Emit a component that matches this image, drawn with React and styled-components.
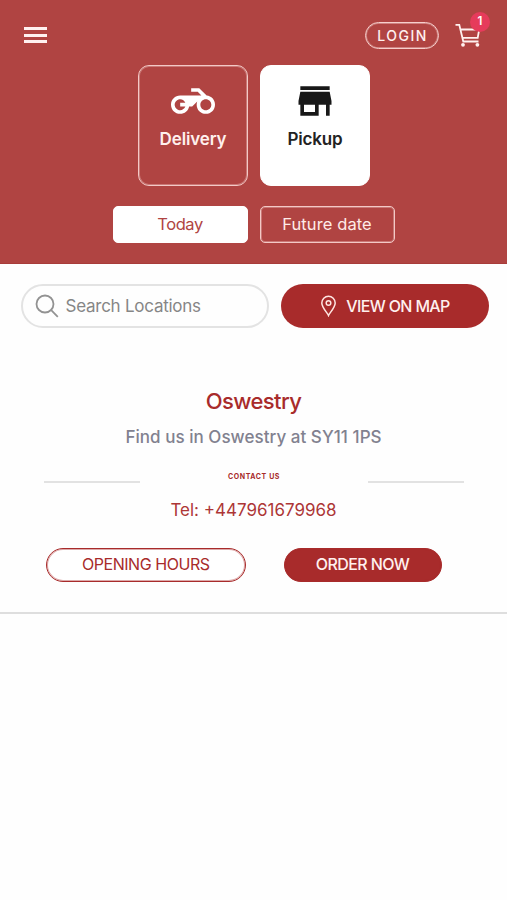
import React from 'react';
import styled, { createGlobalStyle } from 'styled-components';

const GlobalStyle = createGlobalStyle`
  * { box-sizing: border-box; }
  body { margin: 0; background: #fefefe; font-family: Inter, "Liberation Sans", sans-serif; }
  button, input { font-family: inherit; margin: 0; padding: 0; }
`;

const Page = styled.div`
  min-height: 900px;
  overflow: hidden;
`;

const Header = styled.header`
  height: 263.5px;
  background: #b04442;
  border-bottom: 1px solid #a83c3a;
`;

const TopBar = styled.div`
  display: flex;
  align-items: center;
  height: 65px;
  padding: 5px 25px 0 24px;
`;

const MenuButton = styled.button`
  display: flex;
  flex-direction: column;
  gap: 3.2px;
  width: 22.5px;
  margin-right: auto;
  border: 0;
  background: none;
`;

const MenuLine = styled.span`
  height: 3px;
  background: #fff1f0;
`;

const LoginButton = styled.button`
  width: 74px;
  height: 27px;
  border: 1px solid #f6cfcc;
  box-shadow: inset 0 0 0 1px rgba(246, 207, 204, 0.45);
  border-radius: 14px;
  background: none;
  color: #fff0ee;
  font-size: 14px;
  font-weight: 500;
  line-height: 25px;
  letter-spacing: 1.45px;
  padding-left: 1px;
`;

const Cart = styled.div`
  position: relative;
  width: 27px;
  height: 25px;
  margin-left: 16px;
`;

const Badge = styled.span`
  position: absolute;
  top: -11px;
  right: -8px;
  width: 20px;
  height: 20px;
  border-radius: 50%;
  background: #e63b5b;
  color: #fff;
  font-size: 11.5px;
  font-weight: 600;
  line-height: 19px;
  text-align: center;
`;

const Methods = styled.div`
  display: flex;
  justify-content: center;
  gap: 12px;
  padding-left: 1px;
`;

const MethodCard = styled.button`
  display: flex;
  flex-direction: column;
  align-items: center;
  width: 110px;
  height: 120.5px;
  padding-top: 12.5px;
  border: 1px solid ${(p) => (p.$selected ? '#fff' : '#f3c9c6')};
  box-shadow: inset 0 0 0 1px rgba(243, 201, 198, ${(p) => (p.$selected ? 0 : 0.4)});
  border-radius: 11px;
  background: ${(p) => (p.$selected ? '#fff' : 'transparent')};
  color: ${(p) => (p.$selected ? '#181818' : '#fff')};
`;

const MethodLabel = styled.span`
  margin-top: 5px;
  color: ${(p) => (p.$selected ? '#222' : '#fff0ed')};
  font-size: 17px;
  font-weight: 600;
  line-height: 22px;
  letter-spacing: -0.15px;
`;

const Dates = styled.div`
  display: flex;
  justify-content: center;
  gap: 12px;
  margin-top: 20.5px;
`;

const DateButton = styled.button`
  width: 135px;
  height: 37px;
  border: 1px solid ${(p) => (p.$selected ? '#fff' : '#f3c9c6')};
  box-shadow: inset 0 0 0 1px rgba(243, 201, 198, ${(p) => (p.$selected ? 0 : 0.4)});
  border-radius: 5px;
  background: ${(p) => (p.$selected ? '#fff' : 'transparent')};
  color: ${(p) => (p.$selected ? '#b04442' : '#ffebe8')};
  font-size: 16.5px;
  line-height: 35px;
  letter-spacing: ${(p) => p.$spacing};
`;

const SearchBar = styled.div`
  display: flex;
  gap: 12px;
  padding: 20.5px 18px 0 21px;
`;

const SearchField = styled.label`
  display: flex;
  align-items: center;
  width: 248px;
  height: 44px;
  padding-left: 12px;
  border: 2px solid #e3e3e3;
  border-radius: 22px;
`;

const SearchInput = styled.input`
  width: 180px;
  height: 30px;
  margin-left: 6.5px;
  border: 0;
  outline: 0;
  background: none;
  font-size: 17px;
  letter-spacing: -0.25px;
  &::placeholder { color: #868686; opacity: 1; }
`;

const MapButton = styled.button`
  display: flex;
  align-items: center;
  justify-content: center;
  gap: 9px;
  width: 208px;
  height: 44px;
  border: 0;
  border-radius: 22px;
  background: #a82b2b;
  color: #fff0ee;
  font-size: 16px;
  font-weight: 500;
  letter-spacing: -0.65px;
`;

const Location = styled.section`
  height: 286px;
  padding-top: 57px;
  border-bottom: 2px solid #dedede;
  text-align: center;
`;

const Name = styled.h2`
  margin: 0;
  color: #a82b2b;
  font-size: 22px;
  font-weight: 500;
  line-height: 32px;
  letter-spacing: -0.6px;
`;

const Address = styled.p`
  margin: 7px 0 0;
  color: #81818f;
  font-size: 17px;
  font-weight: 500;
  line-height: 26px;
  letter-spacing: 0.04px;
`;

const ContactRow = styled.div`
  display: flex;
  justify-content: space-between;
  align-items: flex-start;
  height: 20px;
  margin: 20px 43px 0 44px;
`;

const Rule = styled.span`
  width: 96px;
  height: 2px;
  margin-top: 10.5px;
  background: #e2e2e2;
`;

const ContactTitle = styled.span`
  margin-top: 1px;
  color: #a82b2b;
  font-size: 7px;
  font-weight: 700;
  line-height: 12px;
  letter-spacing: 0.6px;
`;

const Phone = styled.p`
  margin: 8px 0 0;
  color: #ad3636;
  font-size: 17px;
  line-height: 24px;
`;

const Actions = styled.div`
  display: flex;
  gap: 38px;
  margin: 26px 0 0 46px;
`;

const ActionButton = styled.button`
  width: ${(p) => p.$width};
  height: 33.5px;
  border: 1px solid #a82b2b;
  box-shadow: inset 0 0 0 1px rgba(168, 43, 43, 0.4);
  border-radius: 17px;
  background: ${(p) => (p.$filled ? '#a82b2b' : '#fff')};
  color: ${(p) => (p.$filled ? '#fff0ee' : '#a82b2b')};
  font-size: 16px;
  font-weight: ${(p) => (p.$filled ? 500 : 400)};
  line-height: 31px;
  letter-spacing: ${(p) => (p.$filled ? '-0.6px' : '-0.45px')};
`;

const BikeIcon = () => (
  <svg width="44" height="44" viewBox="0 0 24 24" fill="currentColor">
    <path d="M19.44 9.03 15.41 5H11v2h3.59l2 2H5c-2.8 0-5 2.2-5 5s2.2 5 5 5c2.46 0 4.45-1.69 4.9-4h1.65l2.77-2.77c-.21.54-.32 1.14-.32 1.77 0 2.8 2.2 5 5 5s5-2.2 5-5c0-2.65-1.97-4.77-4.56-4.97zM7.82 15C7.4 16.15 6.28 17 5 17c-1.63 0-3-1.37-3-3s1.37-3 3-3c1.28 0 2.4.85 2.82 2H5v2h2.82zM19 17c-1.66 0-3-1.34-3-3s1.34-3 3-3 3 1.34 3 3-1.34 3-3 3z" />
  </svg>
);

const StoreIcon = () => (
  <svg width="44" height="44" viewBox="0 0 24 24" fill="currentColor">
    <path d="M20 4H4v2h16V4zm1 10v-2l-1-5H4l-1 5v2h1v6h10v-6h4v6h2v-6h1zm-9 4H6v-4h6v4z" />
  </svg>
);

const CartIcon = () => (
  <svg width="27" height="25" viewBox="0 0 27 25" fill="none" stroke="#fff1ef" strokeWidth="1.8">
    <path d="M.5 1.8H4.3L8.3 18.5H23.5M5.3 6.5H24.2L22.7 14.8H7.4" />
    <circle cx="8" cy="21.8" r="1.9" fill="#fff1ef" stroke="none" />
    <circle cx="22.4" cy="21.8" r="1.9" fill="#fff1ef" stroke="none" />
  </svg>
);

const SearchIcon = () => (
  <svg width="24" height="24" viewBox="0 0 24 24" fill="none" stroke="#929292" strokeWidth="1.8">
    <circle cx="10" cy="10" r="8.5" />
    <path d="M16.2 16.2 22.8 22.8" />
  </svg>
);

const PinIcon = () => (
  <svg width="17" height="22" viewBox="0 0 17 22" fill="none" stroke="#ffe6e2" strokeWidth="1.5">
    <path d="M8.5 20.5C7.5 18 1.8 12.6 1.8 8a6.7 6.7 0 0 1 13.4 0c0 4.6-5.7 10-6.7 12.5Z" />
    <circle cx="8.5" cy="8" r="2.3" />
  </svg>
);

export default function App() {
  return (
    <Page>
      <GlobalStyle />
      <Header>
        <TopBar>
          <MenuButton aria-label="Menu"><MenuLine /><MenuLine /><MenuLine /></MenuButton>
          <LoginButton>LOGIN</LoginButton>
          <Cart><CartIcon /><Badge>1</Badge></Cart>
        </TopBar>
        <Methods>
          <MethodCard><BikeIcon /><MethodLabel>Delivery</MethodLabel></MethodCard>
          <MethodCard $selected><StoreIcon /><MethodLabel $selected>Pickup</MethodLabel></MethodCard>
        </Methods>
        <Dates>
          <DateButton $selected $spacing="-0.4px">Today</DateButton>
          <DateButton $spacing="0.1px">Future date</DateButton>
        </Dates>
      </Header>
      <SearchBar>
        <SearchField><SearchIcon /><SearchInput placeholder="Search Locations" /></SearchField>
        <MapButton><PinIcon />VIEW ON MAP</MapButton>
      </SearchBar>
      <Location>
        <Name>Oswestry</Name>
        <Address>Find us in Oswestry at SY11 1PS</Address>
        <ContactRow><Rule /><ContactTitle>CONTACT US</ContactTitle><Rule /></ContactRow>
        <Phone>Tel: +447961679968</Phone>
        <Actions>
          <ActionButton $width="199.5px">OPENING HOURS</ActionButton>
          <ActionButton $filled $width="158px">ORDER NOW</ActionButton>
        </Actions>
      </Location>
    </Page>
  );
}
